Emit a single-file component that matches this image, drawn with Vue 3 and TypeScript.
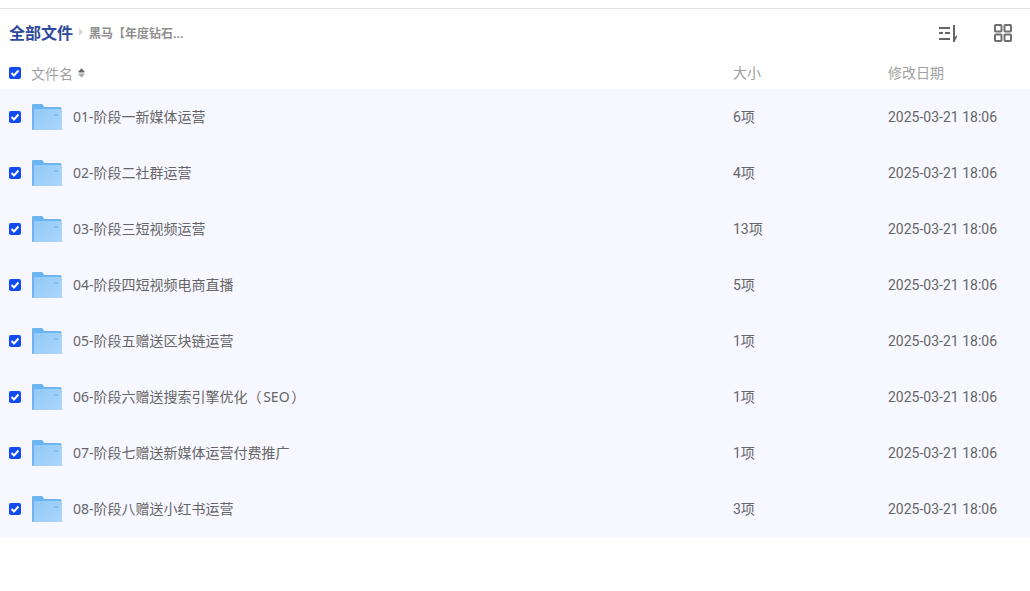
<template>
  <div class="page">
    <div class="toolbar">
      <div class="crumbs">
        <span class="crumbs__root">全部文件</span>
        <span class="crumbs__sep" />
        <span class="crumbs__current">黑马【年度钻石...</span>
      </div>
      <div class="actions">
        <svg class="action" width="18" height="17" viewBox="0 0 18 17" fill="#666">
          <rect x="0" y="2" width="11" height="2" />
          <rect x="0" y="7" width="4" height="2" />
          <rect x="6" y="7" width="5" height="2" />
          <rect x="0" y="13" width="11" height="2" />
          <path d="M14 0h2v12l2-2v2l-2.500 5H14z" />
        </svg>
        <svg class="action" width="18" height="18" viewBox="0 0 18 18" fill="none" stroke="#707070" stroke-width="2">
          <rect x="1" y="1" width="6.500" height="6.500" rx="0.800" />
          <rect x="10.500" y="1" width="6.500" height="6.500" rx="0.800" />
          <rect x="1" y="10.500" width="6.500" height="6.500" rx="0.800" />
          <rect x="10.500" y="10.500" width="6.500" height="6.500" rx="0.800" />
        </svg>
      </div>
    </div>

    <div class="head">
      <span class="check"><svg width="10" height="8" viewBox="0 0 10 8"><path d="M1.500 4l2.500 2.500L8.500 1.500" fill="none" stroke="#fff" stroke-width="2" /></svg></span>
      <div class="head__name">
        文件名
        <svg class="sort" width="7" height="10" viewBox="0 0 7 10" stroke-width="1" stroke-linejoin="round">
          <path d="M3.500 0.800L6.300 4H0.700z" fill="#666" stroke="#666" />
          <path d="M0.700 6H6.300L3.500 9.200z" fill="#aaa" stroke="#aaa" />
        </svg>
      </div>
      <div class="col-size">大小</div>
      <div class="col-date">修改日期</div>
    </div>

    <div class="list">
      <div v-for="row in rows" :key="row.name" class="row">
        <span class="check"><svg width="10" height="8" viewBox="0 0 10 8"><path d="M1.500 4l2.500 2.500L8.500 1.500" fill="none" stroke="#fff" stroke-width="2" /></svg></span>
        <svg class="folder" width="30" height="28" viewBox="0 0 30 28">
          <defs>
            <linearGradient id="folderFill" x1="0" y1="0" x2="1" y2="1">
              <stop offset="0" stop-color="#93c9f6" />
              <stop offset="1" stop-color="#a9d6fc" />
            </linearGradient>
          </defs>
          <path d="M0 2Q0 1 1 1h8.500q1 0 1.500 1l1 2H28q1.500 0 1.500 1.500V27H1q-1 0-1-1z" fill="#6db4ee" />
          <path d="M2 6h27.500v21H2z" fill="url(#folderFill)" />
          <rect x="22" y="11" width="4" height="2" fill="#84bdee" />
        </svg>
        <div class="col-name">{{ row.name }}</div>
        <div class="col-size">{{ row.size }}</div>
        <div class="col-date">2025-03-21 18:06</div>
      </div>
    </div>
  </div>
</template>

<script setup lang="ts">
const rows = [
  { name: '01-阶段一新媒体运营', size: '6项' },
  { name: '02-阶段二社群运营', size: '4项' },
  { name: '03-阶段三短视频运营', size: '13项' },
  { name: '04-阶段四短视频电商直播', size: '5项' },
  { name: '05-阶段五赠送区块链运营', size: '1项' },
  { name: '06-阶段六赠送搜索引擎优化（ SEO ）', size: '1项' },
  { name: '07-阶段七赠送新媒体运营付费推广', size: '1项' },
  { name: '08-阶段八赠送小红书运营', size: '3项' }
]
</script>

<style>
html,
body {
  background: #fff;
}
</style>

<style scoped>
.page {
  font-family: Roboto, 'Noto Sans CJK SC', sans-serif;
  padding-top: 8px;
  height: 583px;
  overflow: hidden;
}

.toolbar {
  display: flex;
  align-items: center;
  justify-content: space-between;
  height: 49px;
  border-top: 1px solid #e2e2e2;
  box-sizing: border-box;
  padding-left: 9px;
}

.crumbs {
  display: flex;
  align-items: center;
  padding-bottom: 2px;
}
.crumbs__root {
  color: #2f4a9a;
  font-size: 16px;
  font-weight: 700;
}
.crumbs__sep {
  width: 0;
  height: 0;
  margin: 0 6px;
  border-left: 4px solid #d8d8d8;
  border-top: 4px solid transparent;
  border-bottom: 4px solid transparent;
}
.crumbs__current {
  color: #8f8f8f;
  font-size: 12px;
  font-weight: 700;
}

.actions {
  display: flex;
  align-items: center;
  gap: 37px;
  padding-right: 18px;
}

.head,
.row {
  display: flex;
  align-items: center;
  padding-left: 9px;
}
.head {
  height: 32px;
  color: #a0a0a0;
  font-size: 14px;
}
.head__name {
  display: flex;
  align-items: center;
  gap: 5px;
  width: 702px;
  margin-left: 10px;
  flex: none;
}

.sort {
  flex: none;
}

.list {
  background: #f7f7ff;
}
.row {
  height: 56px;
  color: #666;
  font-size: 14px;
}
.row .col-name {
  font-family: 'Noto Sans', 'Noto Sans CJK SC', sans-serif;
  word-spacing: -2px;
}
.row .col-name,
.row .col-size,
.head .col-size,
.head .col-date {
  padding-bottom: 2px;
}

.check {
  display: flex;
  align-items: center;
  justify-content: center;
  flex: none;
  width: 12px;
  height: 12px;
  border-radius: 2px;
  background: #0f4bf0;
}

.folder {
  flex: none;
  margin: 0 11px 0 11px;
}

.col-name {
  width: 660px;
  flex: none;
}
.col-size {
  width: 155px;
  flex: none;
}
.col-date {
  flex: none;
}
</style>
